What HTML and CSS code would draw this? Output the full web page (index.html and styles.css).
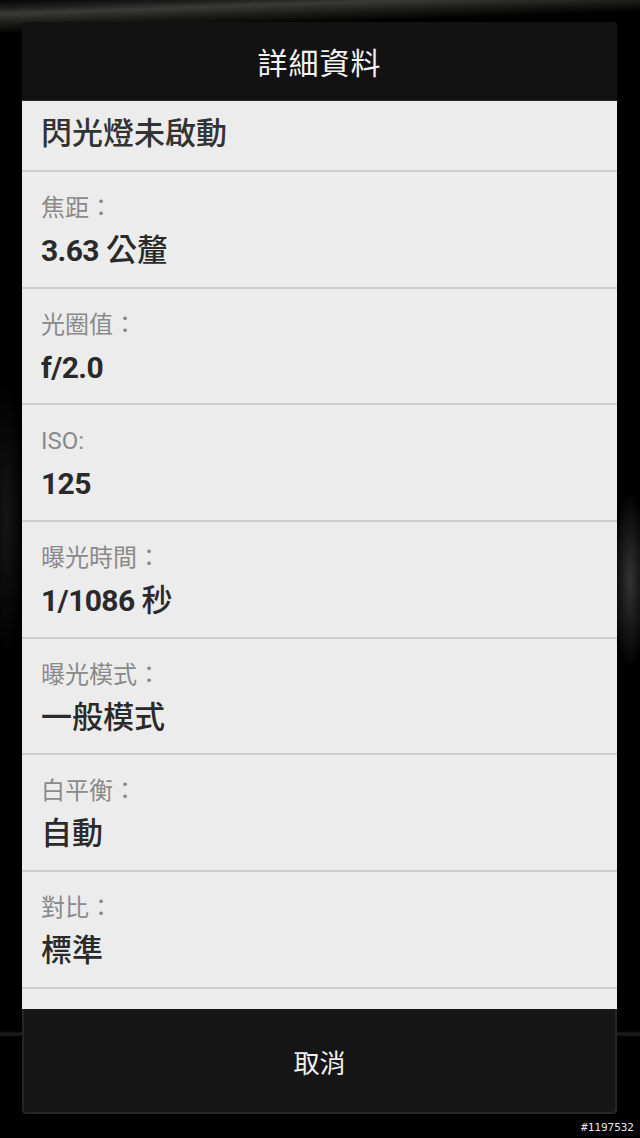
FILE: index.html
```html
<!DOCTYPE html>
<html lang="zh-Hant">
<head>
<meta charset="utf-8">
<title>詳細資料</title>
<link rel="stylesheet" href="styles.css">
</head>
<body>
<div class="screen">
  <div class="backdrop-top"></div>
  <div class="dialog">
    <div class="dialog-title">詳細資料</div>
    <div class="dialog-body">
      <div class="row row-first"><div class="value plain">閃光燈未啟動</div></div>
      <div class="row"><div class="label">焦距：</div><div class="value"><span class="num">3.63</span> 公釐</div></div>
      <div class="row"><div class="label">光圈值：</div><div class="value"><span class="num">f/2.0</span></div></div>
      <div class="row"><div class="label">ISO:</div><div class="value"><span class="num">125</span></div></div>
      <div class="row"><div class="label">曝光時間：</div><div class="value"><span class="num">1/1086</span> 秒</div></div>
      <div class="row"><div class="label">曝光模式：</div><div class="value">一般模式</div></div>
      <div class="row"><div class="label">白平衡：</div><div class="value">自動</div></div>
      <div class="row"><div class="label">對比：</div><div class="value">標準</div></div>
      <div class="row"></div>
    </div>
    <div class="dialog-footer"><span class="cancel">取消</span></div>
  </div>
  <div class="watermark">#1197532</div>
</div>
</body>
</html>
```

FILE: styles.css
```css
html, body {
  margin: 0;
  padding: 0;
  background: #000;
}
.screen {
  position: relative;
  width: 640px;
  height: 1138px;
  overflow: hidden;
  background:
    linear-gradient(180deg, transparent 0, transparent 1031px, #1a1a1a 1033px, #1a1a1a 1035px, transparent 1037px),
    radial-gradient(ellipse 18px 90px at 630px 580px, #333 0%, transparent 100%),
    radial-gradient(ellipse 18px 140px at 6px 520px, #161616 0%, transparent 100%),
    #000;
  font-family: "Noto Sans CJK TC", "Noto Sans", sans-serif;
}
.backdrop-top {
  position: absolute;
  left: 0;
  top: 0;
  width: 640px;
  height: 40px;
  background:
    linear-gradient(178deg, #050505 0, #1e1e1e 8px, #3a3a38 14px, #1a1a18 24px, #000 34px);
}
.dialog {
  position: relative;
  margin: 22px 0 0 22px;
  width: 595px;
  height: 1092px;
  border-radius: 4px;
  overflow: hidden;
  display: flex;
  flex-direction: column;
  background: #151515;
}
.dialog-title {
  height: 79px;
  flex: none;
  background: #121212;
  color: #f4f4f4;
  font-size: 30px;
  line-height: 79px;
  text-align: center;
  letter-spacing: 1px;
  border-bottom: 1px solid #2a2a2a;
  box-sizing: border-box;
}
.dialog-body {
  height: 908px;
  flex: none;
  background: #ececec;
  overflow: hidden;
}
.row {
  height: 116.7px;
  box-sizing: border-box;
  border-bottom: 2px solid #cdcdcd;
  padding-left: 19px;
}
.row-first {
  height: 71px;
  padding-top: 10px;
}
.label {
  padding-top: 19px;
  font-size: 24px;
  line-height: 34px;
  color: #8a8a8a;
  font-family: "Roboto", "Noto Sans CJK TC", sans-serif;
}
.value {
  margin-top: 3px;
  font-size: 31px;
  line-height: 40px;
  font-weight: 500;
  color: #2a2a2a;
  font-family: "Noto Sans CJK TC", sans-serif;
  white-space: pre;
}
.num {
  font-family: "Roboto", sans-serif;
  font-weight: 700;
  font-size: 30px;
  letter-spacing: -0.6px;
}
.value.plain {
  margin-top: 0;
  color: #333;
}
.dialog-footer {
  flex: 1;
  background: #161616;
  border: 2px solid #262626;
  border-top: none;
  border-radius: 0 0 4px 4px;
  display: flex;
  align-items: center;
  justify-content: center;
}
.cancel {
  color: #f0f0f0;
  font-size: 26px;
  margin-top: 2px;
}
.watermark {
  position: absolute;
  right: 6px;
  bottom: 3px;
  color: #e8e8e8;
  font-family: "DejaVu Sans Mono", monospace;
  font-size: 11px;
  line-height: 14px;
}
```
